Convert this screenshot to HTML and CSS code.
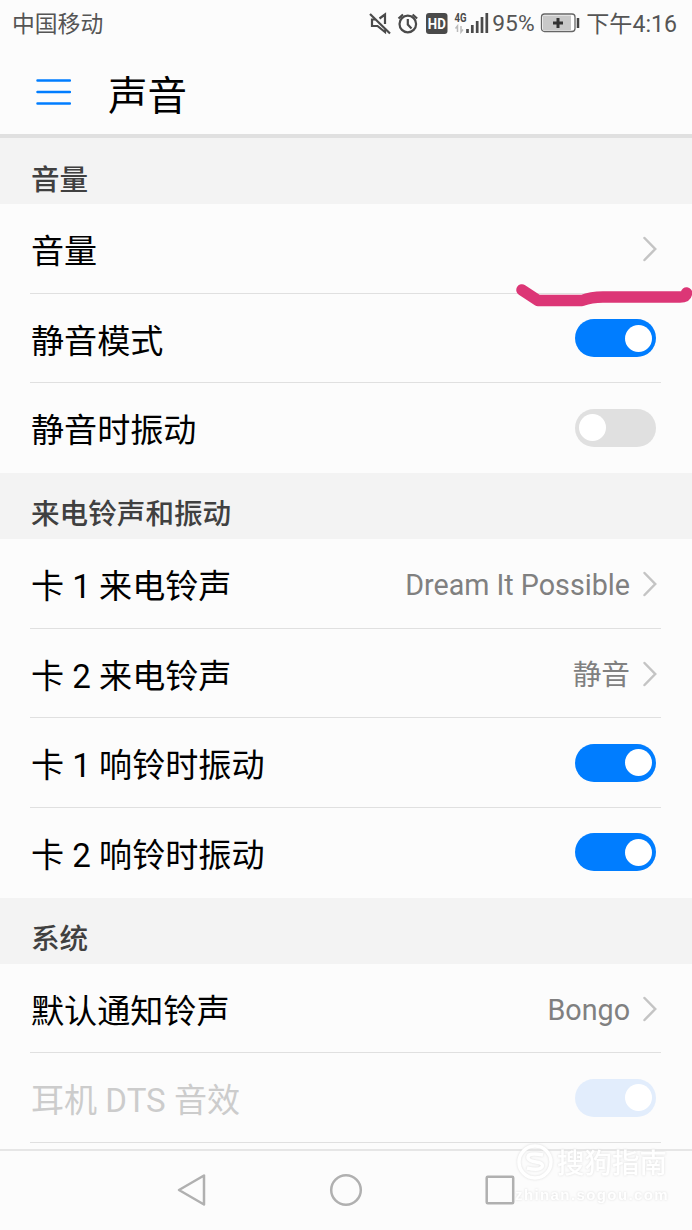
FILE: index.html
```html
<!DOCTYPE html>
<html lang="zh-CN">
<head>
<meta charset="utf-8">
<title>声音</title>
<link rel="stylesheet" href="styles.css">
</head>
<body>
<div class="screen">
  <div class="status">
    <span class="carrier">中国移动</span>
    <svg class="status-icons" width="122" height="48" viewBox="0 0 122 48">
      <g fill="none" stroke="#4a4a4a" stroke-width="2.200">
        <path d="M2 14L22 33.500"/>
        <path d="M11.500 18.500L17 14.500V24M7 19.500H4V26H9.500L17 32V29.500"/>
        <circle cx="39.800" cy="24" r="8.300"/>
        <path d="M39.800 19V24.500L43.500 28.500M30.500 18.500L35 14.500M44.600 14.500L49.100 18.500"/>
      </g>
      <rect x="58" y="13" width="21.500" height="21" rx="3" fill="#4a4a4a"/>
      <text x="68.800" y="28.500" class="hd" text-anchor="middle" textLength="18" lengthAdjust="spacingAndGlyphs">HD</text>
      <text x="86.500" y="22" class="gen" textLength="12" lengthAdjust="spacingAndGlyphs">4G</text>
      <path d="M89.500 32V26L87.500 28.500M93 26V32L95 29.500" fill="none" stroke="#bbb" stroke-width="1.500"/>
      <path d="M99.500 29V33M104.300 25V33M109.200 21V33M114 17V33M118.800 13V33" fill="none" stroke="#4a4a4a" stroke-width="2.700"/>
    </svg>
    <span class="percent">95%</span>
    <svg class="battery" width="40" height="48" viewBox="0 0 40 48">
      <rect x="1.500" y="14" width="33.500" height="17.500" rx="3" fill="#fff" stroke="#666" stroke-width="1.300"/>
      <rect x="3" y="15.500" width="28" height="14.500" fill="#c8c8c8"/>
      <path d="M13 23H23M18 18V28" stroke="#333" stroke-width="3"/>
      <path d="M38 18V28" stroke="#444" stroke-width="2.500"/>
    </svg>
    <span class="clock">下午4:16</span>
  </div>
  <header class="header">
    <svg width="36" height="28" viewBox="0 0 36 28"><path d="M2.500 1.500H35M2.500 13H35M2.500 24.500H35" stroke="#007dff" stroke-width="2.500" stroke-linecap="round"/></svg>
    <h1 class="title">声音</h1>
  </header>
  <main class="settings">
    <h2 class="section">音量</h2>
    <div class="row"><span class="label">音量</span><svg class="chevron" viewBox="0 0 14 26"><path d="M2.500 2L13.200 13L2.500 24"/></svg>
      <svg class="marker" width="176" height="26" viewBox="0 0 176 26"><path d="M6 8L22 18.500H66Q75 15 87 15H164Q170 15 170.500 11"/></svg>
    </div>
    <div class="row"><span class="label">静音模式</span><span class="switch on"></span></div>
    <div class="row last"><span class="label">静音时振动</span><span class="switch"></span></div>
    <h2 class="section">来电铃声和振动</h2>
    <div class="row"><span class="label">卡 1 来电铃声</span><span class="value">Dream It Possible</span><svg class="chevron" viewBox="0 0 14 26"><path d="M2.500 2L13.200 13L2.500 24"/></svg></div>
    <div class="row"><span class="label">卡 2 来电铃声</span><span class="value">静音</span><svg class="chevron" viewBox="0 0 14 26"><path d="M2.500 2L13.200 13L2.500 24"/></svg></div>
    <div class="row"><span class="label">卡 1 响铃时振动</span><span class="switch on"></span></div>
    <div class="row last"><span class="label">卡 2 响铃时振动</span><span class="switch on"></span></div>
    <h2 class="section">系统</h2>
    <div class="row"><span class="label">默认通知铃声</span><span class="value">Bongo</span><svg class="chevron" viewBox="0 0 14 26"><path d="M2.500 2L13.200 13L2.500 24"/></svg></div>
    <div class="row disabled"><span class="label">耳机 DTS 音效</span><span class="switch on"></span></div>
  </main>
  <nav class="nav">
    <svg width="34" height="34" viewBox="0 0 34 34"><path d="M4 17L29 2.500V31.500Z"/></svg>
    <svg width="34" height="34" viewBox="0 0 34 34"><circle cx="17" cy="17" r="14.800"/></svg>
    <svg width="34" height="34" viewBox="0 0 34 34"><rect x="3.700" y="3.700" width="26.500" height="26.500" rx="1"/></svg>
  </nav>
  <div class="watermark">
    <svg width="40" height="40" viewBox="0 0 40 40"><circle cx="20" cy="20" r="16"/><path d="M28 13Q12 10 13 16Q14 19 21 20Q29 21 27 25Q24 29 12 26"/></svg>
    <span class="wm-name">搜狗指南</span>
    <span class="wm-url">zhinan.sogou.com</span>
  </div>
</div>
</body>
</html>
```
FILE: styles.css
```css
* { box-sizing: border-box; }
body { margin: 0; background: #fcfcfc; font-family: Roboto, "Noto Sans CJK SC", sans-serif; }
.screen { position: relative; width: 692px; height: 1230px; overflow: hidden; display: flex; flex-direction: column; background: #fcfcfc; }
svg { display: block; flex: none; }
.status { height: 48px; flex: none; display: flex; align-items: center; padding: 0 15px 0 12px; color: #555; font-size: 22.800px; line-height: 48px; white-space: nowrap; }
.carrier { flex: 1; padding-top: 2px; }
.status-icons { margin-right: 2px; }
.percent { width: 48px; font-size: 22.800px; }
.battery { margin-right: 6px; }
.clock { font-size: 23.100px; padding-top: 1px; }
.hd { font: bold 14px Roboto, sans-serif; fill: #fff; }
.gen { font: bold 12px Roboto, sans-serif; fill: #4a4a4a; }
.header { height: 90px; flex: none; display: flex; align-items: center; gap: 37px; padding: 3px 0 0 35px; border-bottom: 4px solid #e0e0e0; }
.title { margin: 0; padding-top: 9px; font-size: 39.500px; font-weight: 400; line-height: 60px; color: #000; }
.settings { flex: none; height: 1011px; }
.section { margin: 0; height: 66.200px; padding: 8.500px 31px 0; background: #f3f3f3; color: #404040; font-size: 28.600px; line-height: 66px; font-weight: 500; }
.row { position: relative; height: 89.600px; margin: 0 31px 0 30px; padding: 0 5px 0 1px; display: flex; align-items: center; border-bottom: 1px solid #e0e0e0; }
.row.last { border-bottom-color: transparent; }
.label { flex: 1; padding-top: 7px; font-size: 33.100px; line-height: 50px; color: #000; white-space: nowrap; }
.value { padding-top: 3px; font-size: 28.700px; line-height: 50px; color: #808080; margin-right: 12px; }
.chevron { width: 14px; height: 26px; margin-top: 1px; overflow: visible; fill: none; stroke: #c4c4c4; stroke-width: 2.500; stroke-linecap: round; }
.switch { width: 81px; height: 38px; border-radius: 19px; background: #e0e0e0; padding: 5.500px 4px; display: flex; }
.switch::before { content: ""; width: 27px; height: 27px; border-radius: 50%; background: #fff; }
.switch.on { background: #007dff; justify-content: flex-end; }
.disabled .label { color: #ccc; }
.disabled .switch { background: #e2edfc; }
.marker { position: absolute; left: 486px; top: 78px; z-index: 1; fill: none; stroke: #dc3676; stroke-width: 11.500; stroke-linecap: round; stroke-linejoin: round; }
.nav { flex: 1; padding-bottom: 1px; border-top: 2px solid #e6e6e6; display: flex; justify-content: center; align-items: center; gap: 120px; }
.nav svg { fill: none; stroke: #b0b0b0; stroke-width: 2.500; stroke-linejoin: round; }
.watermark { position: absolute; left: 515px; top: 1142px; display: grid; grid-template-columns: 40px auto; column-gap: 2px; color: #fff; filter: drop-shadow(0 0 1px #dcdcdc); }
.watermark svg { fill: none; stroke: #fff; stroke-width: 3.500; }
.wm-name { padding-top: 2px; font-size: 27.500px; line-height: 40px; font-weight: 500; }
.wm-url { grid-column: 1 / 3; font: bold 15px/20px "Liberation Sans", sans-serif; letter-spacing: 1.400px; margin-top: 1px; }
```
